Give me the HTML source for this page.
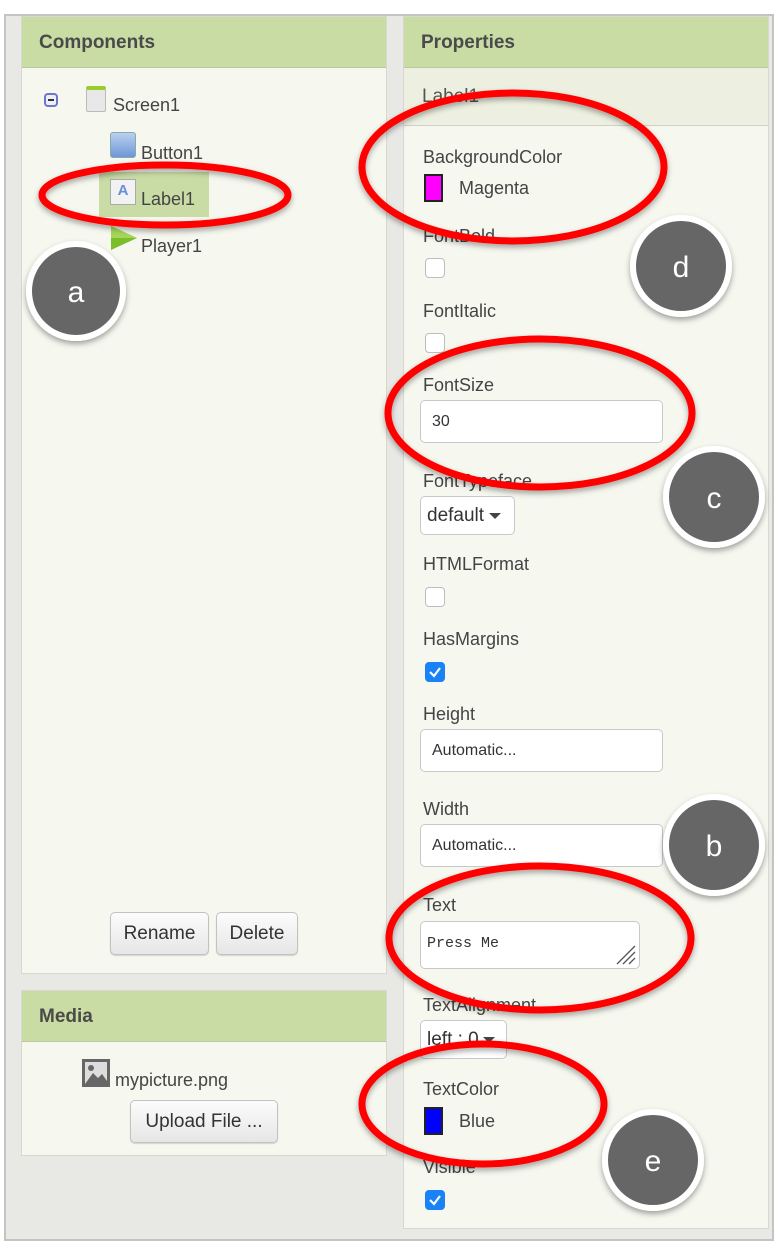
<!DOCTYPE html>
<html><head><meta charset="utf-8">
<style>
*{box-sizing:border-box;margin:0;padding:0}
body{width:778px;height:1252px;background:#fff;position:relative;overflow:hidden;font-family:"Liberation Sans",sans-serif;color:#444}
.a{position:absolute}
.frame{left:4px;top:14px;width:770px;height:1227px;border:2px solid #c4c4c4;background:#e8e8e5}
.panel{background:#f6f7ef;border:1px solid #d8d8d0}
.hdr{background:#c8dca4;border-bottom:1px solid #b9c99a;font-weight:bold;font-size:19px;color:#4a4a4a;padding-left:17px;height:51px;line-height:51px}
.t{font-size:18px;white-space:nowrap}
.lbl{position:absolute;left:423px;font-size:18px;color:#444;white-space:nowrap;line-height:20px}
.cb{position:absolute;left:425px;width:20px;height:20px;border:1px solid #bdbdbd;border-radius:4px;background:#fff}
.cbc{background:#1a82f7;border-color:#1a82f7}
.inp{position:absolute;left:420px;width:243px;height:43px;border:1px solid #c8c8c8;border-radius:5px;background:#fff;font-size:16px;padding-left:11px;line-height:41px;color:#333}
.btn{position:absolute;border:1px solid #c2c2c2;border-radius:5px;background:linear-gradient(#fcfcfc,#e6e6e6);font-size:19px;color:#333;text-align:center;box-shadow:0 1px 1px rgba(0,0,0,.15)}
.sw{position:absolute;left:424px;width:19px;height:28px;border:2px solid #222}
.arr{display:inline-block;width:0;height:0;border-left:6px solid transparent;border-right:6px solid transparent;border-top:6px solid #444;vertical-align:middle;margin-left:2px}
</style></head><body>
<div class="a frame"></div>
<div class="a panel" style="left:21px;top:16px;width:366px;height:958px">
 <div class="hdr">Components</div>
</div>
<div class="a" style="left:44px;top:93px;width:14px;height:14px;border:2px solid #6d74c9;border-radius:4px;background:#eef"></div>
<div class="a" style="left:48px;top:99px;width:6px;height:2px;background:#333"></div>
<div class="a" style="left:86px;top:86px;width:20px;height:26px;border:1px solid #bbb;border-radius:2px;background:#e8e8e8;border-top:4px solid #9ccc2a"></div>
<div class="a t" style="left:113px;top:95px">Screen1</div>
<div class="a" style="left:110px;top:132px;width:26px;height:26px;border-radius:3px;background:linear-gradient(#b9d0ef,#6e97d6);border:1px solid #8aa"></div>
<div class="a t" style="left:141px;top:143px">Button1</div>
<div class="a" style="left:99px;top:172px;width:110px;height:45px;background:#c9dca5"></div>
<div class="a" style="left:110px;top:179px;width:26px;height:26px;border:1px solid #aaa;background:#f2f2f2;color:#6a8fd8;font-size:15px;font-weight:bold;text-align:center;line-height:22px">A</div>
<div class="a t" style="left:141px;top:189px">Label1</div>
<svg class="a" style="left:110px;top:226px" width="28" height="24"><polygon points="1,0 27,12 1,24" fill="#7cbd2a"/><polygon points="1,0 27,12 1,12" fill="#a4d65a"/></svg>
<div class="a t" style="left:141px;top:236px">Player1</div>
<div class="btn" style="left:110px;top:912px;width:99px;height:43px;line-height:41px">Rename</div>
<div class="btn" style="left:216px;top:912px;width:82px;height:43px;line-height:41px">Delete</div>
<div class="a panel" style="left:21px;top:990px;width:366px;height:166px">
 <div class="hdr">Media</div>
</div>
<svg class="a" style="left:82px;top:1059px" width="28" height="28"><rect width="28" height="28" fill="#666"/><rect x="3" y="3" width="22" height="22" fill="#ddd"/><polygon points="3,25 11,14 16,19 20,15 25,22 25,25" fill="#666"/><circle cx="9" cy="9" r="3" fill="#666"/></svg>
<div class="a t" style="left:115px;top:1070px">mypicture.png</div>
<div class="btn" style="left:130px;top:1100px;width:148px;height:43px;line-height:41px">Upload File ...</div>
<div class="a panel" style="left:403px;top:16px;width:366px;height:1213px">
 <div class="hdr">Properties</div>
 <div style="height:58px;background:#edf0e0;border-bottom:1px solid #d0d0c8;font-size:19px;line-height:58px;padding-left:18px;color:#555">Label1</div>
</div>
<div class="lbl" style="top:147px">BackgroundColor</div>
<div class="sw" style="top:174px;background:#f0f"></div>
<div class="lbl" style="left:459px;top:178px">Magenta</div>
<div class="lbl" style="top:226px">FontBold</div>
<div class="cb" style="top:258px"></div>
<div class="lbl" style="top:301px">FontItalic</div>
<div class="cb" style="top:333px"></div>
<div class="lbl" style="top:375px">FontSize</div>
<div class="inp" style="top:400px">30</div>
<div class="lbl" style="top:471px">FontTypeface</div>
<div class="inp" style="top:496px;width:95px;height:39px;line-height:37px;font-size:19px;padding-left:6px">default<span class="arr" style="margin-left:5px"></span></div>
<div class="lbl" style="top:554px">HTMLFormat</div>
<div class="cb" style="top:587px"></div>
<div class="lbl" style="top:629px">HasMargins</div>
<div class="cb cbc" style="top:662px"><svg width="18" height="18" style="position:absolute;left:0;top:0"><path d="M4 9 L8 13 L14 5" stroke="#fff" stroke-width="2.2" fill="none"/></svg></div>
<div class="lbl" style="top:704px">Height</div>
<div class="inp" style="top:729px">Automatic...</div>
<div class="lbl" style="top:799px">Width</div>
<div class="inp" style="top:824px">Automatic...</div>
<div class="lbl" style="top:895px">Text</div>
<div class="inp" style="top:921px;width:220px;height:48px;line-height:44px;font-family:'Liberation Mono',monospace;font-size:15px;padding-left:6px">Press Me
<svg width="24" height="24" style="position:absolute;right:2px;bottom:2px"><path d="M22 4 L4 22 M22 10 L10 22 M22 16 L16 22" stroke="#555" stroke-width="1.3"/></svg></div>
<div class="lbl" style="top:995px">TextAlignment</div>
<div class="inp" style="top:1020px;width:87px;height:39px;line-height:37px;font-size:19px;padding-left:6px">left : 0<span class="arr" style="margin-left:4px"></span></div>
<div class="lbl" style="top:1079px">TextColor</div>
<div class="sw" style="top:1107px;background:#00f"></div>
<div class="lbl" style="left:459px;top:1111px">Blue</div>
<div class="lbl" style="top:1157px">Visible</div>
<div class="cb cbc" style="top:1190px"><svg width="18" height="18" style="position:absolute;left:0;top:0"><path d="M4 9 L8 13 L14 5" stroke="#fff" stroke-width="2.2" fill="none"/></svg></div>
<svg class="a" style="left:0;top:0" width="778" height="1252">
<defs><filter id="sh" x="-20%" y="-20%" width="140%" height="140%"><feDropShadow dx="0" dy="3" stdDeviation="3" flood-opacity="0.35"/></filter></defs>
<g fill="none" stroke="#f00" stroke-width="7" filter="url(#sh)">
<ellipse cx="165" cy="195" rx="123" ry="30"/>
<ellipse cx="513" cy="167" rx="151" ry="74"/>
<ellipse cx="540" cy="413" rx="152" ry="74"/>
<ellipse cx="540" cy="938" rx="151" ry="72"/>
<ellipse cx="483" cy="1104" rx="121" ry="60"/>
</g>
<g filter="url(#sh)">
<circle cx="76" cy="291" r="47" fill="#666" stroke="#fff" stroke-width="6"/>
<circle cx="681" cy="266" r="48" fill="#666" stroke="#fff" stroke-width="6"/>
<circle cx="714" cy="497" r="48" fill="#666" stroke="#fff" stroke-width="6"/>
<circle cx="714" cy="845" r="48" fill="#666" stroke="#fff" stroke-width="6"/>
<circle cx="653" cy="1160" r="48" fill="#666" stroke="#fff" stroke-width="6"/>
</g>
<g fill="#fff" font-family="Liberation Sans, sans-serif" font-size="30" text-anchor="middle">
<text x="76" y="302">a</text><text x="681" y="277">d</text><text x="714" y="508">c</text><text x="714" y="856">b</text><text x="653" y="1171">e</text>
</g>
</svg>
</body></html>
